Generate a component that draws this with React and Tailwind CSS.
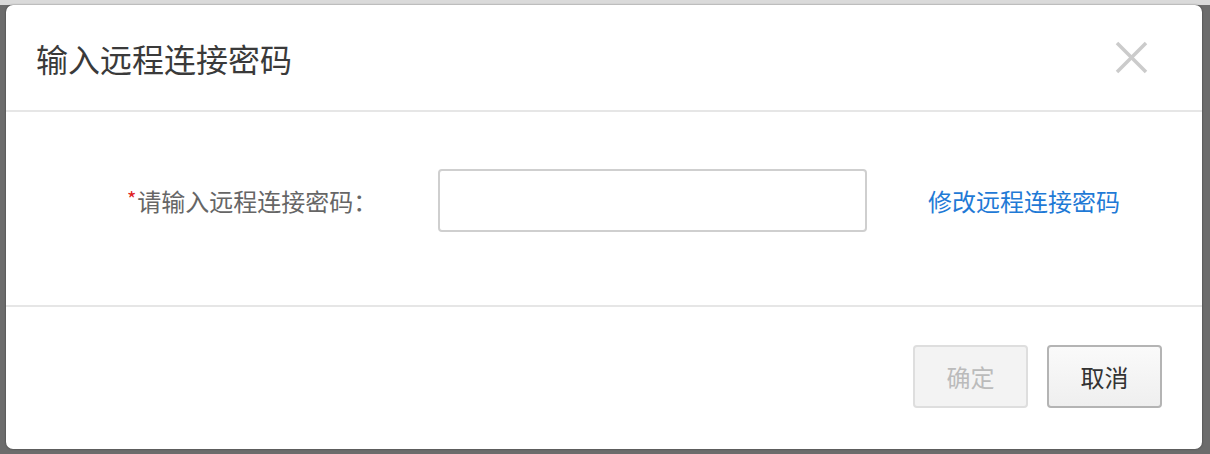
import React from 'react';

const font = { fontFamily: '"Noto Sans CJK SC", "Noto Sans", sans-serif' };

const CloseIcon = () => (
    <svg width="33" height="33" viewBox="0 0 33 33" className="text-[#cbcbcb]">
        <path d="M2 2 L31 31 M31 2 L2 31" stroke="currentColor" strokeWidth="3.5" fill="none" />
    </svg>
);

const App = () => {
    return (
        <div className="w-[1210px] h-[454px] bg-[#6c6c6c] overflow-hidden" style={font}>
            <div className="h-[5px] bg-[#dadada]" />
            <div className="ml-[6px] w-[1196px] h-[444px] bg-white rounded-[7px] shadow-[0_0_2px_rgba(0,0,0,0.5)] flex flex-col">
                <div className="h-[107px] shrink-0 flex items-center justify-between pl-[30px] pr-[54px] border-b-2 border-[#e6e6e6]">
                    <h1 className="text-[32px] leading-none text-[#3a3a3a] font-normal">输入远程连接密码</h1>
                    <CloseIcon />
                </div>

                <div className="h-[193px] shrink-0 pt-[57px] pl-[121px] flex items-start">
                    <div className="w-[311px] h-[63px] flex items-center text-[24px] text-[#666]">
                        <span className="text-[#e02020] text-[20px] mr-[1px] -mt-[4px]">*</span>
                        <span>请输入远程连接密码：</span>
                    </div>
                    <input
                        type="password"
                        className="w-[429px] h-[63px] border-2 border-[#cfcfcf] rounded-[4px] outline-none px-3 text-[24px]"
                    />
                    <a className="ml-[61px] h-[63px] flex items-center text-[24px] text-[#1f7ad6] cursor-pointer">
                        修改远程连接密码
                    </a>
                </div>

                <div className="flex-1 border-t-2 border-[#e6e6e6] pt-[38px] pr-[40px] flex justify-end items-start gap-[19px]">
                    <button
                        disabled
                        className="w-[115px] h-[63px] rounded-[4px] border-2 border-[#dedede] bg-[#f3f3f3] text-[24px] text-[#bbbbbb]"
                    >
                        确定
                    </button>
                    <button className="w-[115px] h-[63px] rounded-[4px] border-2 border-[#b4b4b4] bg-gradient-to-b from-[#fafafa] to-[#efefef] text-[24px] text-[#333]">
                        取消
                    </button>
                </div>
            </div>
        </div>
    );
};

export default App;
